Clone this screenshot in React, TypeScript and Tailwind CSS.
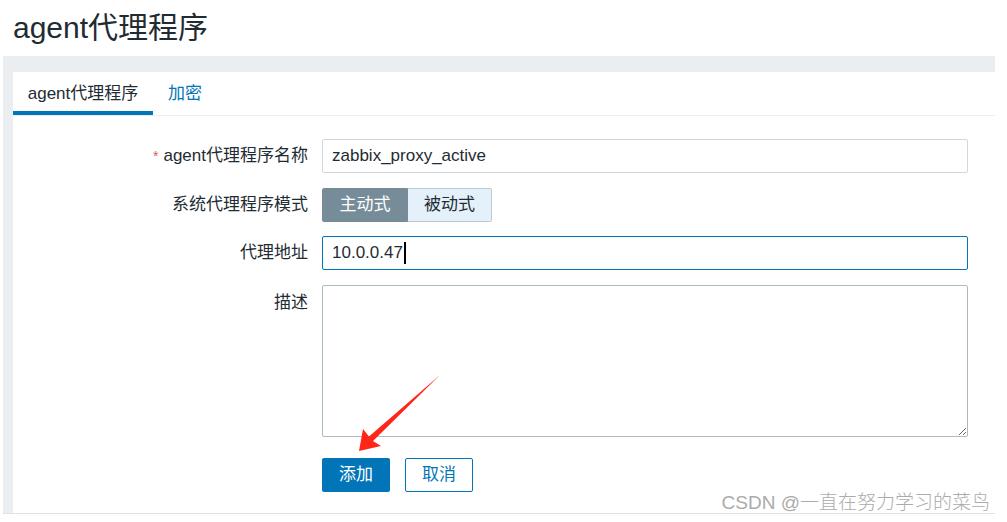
import { useState } from 'react';

export default function App() {
  const [mode, setMode] = useState<'active' | 'passive'>('active');

  return (
    <div
      className="relative h-[522px] w-full overflow-hidden bg-white pl-[3px] pr-[12px] text-[#1f2c33]"
      style={{ fontFamily: '"Liberation Sans", Arial, "Noto Sans CJK SC", sans-serif' }}
    >
      {/* page title */}
      <div className="flex h-[56px] items-center pl-[10px]">
        <h1 className="text-[30px] font-normal leading-none">agent代理程序</h1>
      </div>

      {/* gray page area with the white form panel */}
      <div className="h-[458px] border-b border-[#dde2e5] bg-[#ebeef0] pl-[10px] pt-[16px]">
        <div className="h-[441px] bg-white">
          {/* tabs */}
          <div className="flex h-[44px] border-b border-[#ebeef0] text-[17px]">
            <div className="flex w-[140px] items-center justify-center border-b-4 border-[#0275b8] pt-[4px]">
              agent代理程序
            </div>
            <div className="flex items-center px-[15px] text-[#0275b8]">加密</div>
          </div>

          {/* form */}
          <div className="grid grid-cols-[295px_1fr] gap-x-[14px] pr-[27px] pt-[23px] text-[17px]">
            <label className="flex h-[34px] items-center justify-end">
              <span className="mr-[5px] text-[14px] text-[#e45959]">*</span>agent代理程序名称
            </label>
            <div className="flex h-[34px] items-center rounded-[2px] border border-[#cfd8dc] px-[9px]">
              zabbix_proxy_active
            </div>

            <label className="mt-[15px] flex h-[34px] items-center justify-end">系统代理程序模式</label>
            <div className="mt-[15px] flex h-[34px]">
              <button
                onClick={() => setMode('active')}
                className={
                  mode === 'active'
                    ? 'w-[86px] rounded-l-[2px] border border-[#768d99] bg-[#768d99] text-white'
                    : 'w-[86px] rounded-l-[2px] border border-[#b9cad3] bg-[#e5f1fa] text-[#1f2c33]'
                }
              >
                主动式
              </button>
              <button
                onClick={() => setMode('passive')}
                className={
                  mode === 'passive'
                    ? 'w-[84px] rounded-r-[2px] border border-[#768d99] bg-[#768d99] text-white'
                    : 'w-[84px] rounded-r-[2px] border border-l-0 border-[#b9cad3] bg-[#e5f1fa] text-[#1f2c33]'
                }
              >
                被动式
              </button>
            </div>

            <label className="mt-[14px] flex h-[34px] items-center justify-end">代理地址</label>
            <div className="mt-[14px] flex h-[34px] items-center rounded-[2px] border border-[#0275b8] px-[9px]">
              10.0.0.47
              <span className="ml-[1px] h-[22px] w-[2px] bg-black" />
            </div>

            <label className="mt-[15px] flex justify-end pt-[5px]">描述</label>
            <textarea className="mt-[15px] h-[152px] rounded-[2px] border border-[#acbbc2] outline-none" />

            <div />
            <div className="mt-[21px] flex gap-[15px]">
              <button className="h-[34px] w-[68px] rounded-[2px] bg-[#0275b8] text-white">添加</button>
              <button className="h-[34px] w-[68px] rounded-[2px] border border-[#0275b8] bg-white text-[#0275b8]">
                取消
              </button>
            </div>
          </div>
        </div>
      </div>

      {/* red annotation arrow */}
      <svg className="pointer-events-none absolute left-0 top-0" width="1007" height="522">
        <polygon
          points="440,375 373,441 381,446 359,451 363,429 369,436.5"
          fill="#ff2519"
        />
      </svg>

      {/* watermark */}
      <div className="absolute bottom-[5px] right-[17px] text-[19px] font-light text-[#ababab]">CSDN @一直在努力学习的菜鸟</div>
    </div>
  );
}
